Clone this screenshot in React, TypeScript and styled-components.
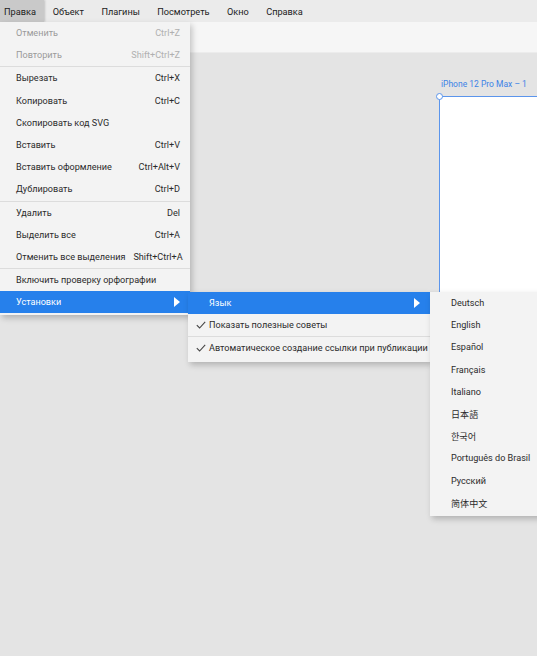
import React from "react";
import styled, { createGlobalStyle } from "styled-components";

const GlobalStyle = createGlobalStyle`
  html, body {
    margin: 0;
    padding: 0;
    background: #e4e4e4;
    font-family: Roboto, "Noto Sans", "Noto Sans CJK SC", sans-serif;
    overflow: hidden;
  }
`;

type Entry =
  | { kind: "item"; label: string; shortcut?: string; disabled?: boolean; active?: boolean; sub?: boolean; checked?: boolean }
  | { kind: "sep" };

const editMenu: Entry[] = [
  { kind: "item", label: "Отменить", shortcut: "Ctrl+Z", disabled: true },
  { kind: "item", label: "Повторить", shortcut: "Shift+Ctrl+Z", disabled: true },
  { kind: "sep" },
  { kind: "item", label: "Вырезать", shortcut: "Ctrl+X" },
  { kind: "item", label: "Копировать", shortcut: "Ctrl+C" },
  { kind: "item", label: "Скопировать код SVG" },
  { kind: "item", label: "Вставить", shortcut: "Ctrl+V" },
  { kind: "item", label: "Вставить оформление", shortcut: "Ctrl+Alt+V" },
  { kind: "item", label: "Дублировать", shortcut: "Ctrl+D" },
  { kind: "sep" },
  { kind: "item", label: "Удалить", shortcut: "Del" },
  { kind: "item", label: "Выделить все", shortcut: "Ctrl+A" },
  { kind: "item", label: "Отменить все выделения", shortcut: "Shift+Ctrl+A" },
  { kind: "sep" },
  { kind: "item", label: "Включить проверку орфографии" },
  { kind: "item", label: "Установки", active: true, sub: true },
];

const prefsMenu: Entry[] = [
  { kind: "item", label: "Язык", active: true, sub: true },
  { kind: "item", label: "Показать полезные советы", checked: true },
  { kind: "sep" },
  { kind: "item", label: "Автоматическое создание ссылки при публикации", checked: true },
];

const languages = [
  "Deutsch",
  "English",
  "Español",
  "Français",
  "Italiano",
  "日本語",
  "한국어",
  "Português do Brasil",
  "Русский",
  "简体中文",
];

const topMenus = ["Правка", "Объект", "Плагины", "Посмотреть", "Окно", "Справка"];

function Arrow() {
  return (
    <svg width="6" height="10" viewBox="0 0 6 10">
      <path d="M0 0 L6 5 L0 10 Z" fill="#fff" />
    </svg>
  );
}

function Check() {
  return (
    <svg width="10" height="8" viewBox="0 0 10 8">
      <path d="M0.8 4.2 L3.6 7 L9.2 0.8" fill="none" stroke="#444" strokeWidth="1.1" />
    </svg>
  );
}

function MenuList({ entries, indent }: { entries: Entry[]; indent: number }) {
  return (
    <>
      {entries.map((e, i) =>
        e.kind === "sep" ? (
          <Separator key={i} />
        ) : (
          <Item key={i} $active={e.active} $disabled={e.disabled} $indent={indent}>
            {e.checked && (
              <CheckSlot>
                <Check />
              </CheckSlot>
            )}
            <span>{e.label}</span>
            <Shortcut $disabled={e.disabled}>{e.shortcut}</Shortcut>
            {e.sub && <Arrow />}
          </Item>
        )
      )}
    </>
  );
}

export default function App() {
  return (
    <Page>
      <GlobalStyle />
      <MenuBar>
        {topMenus.map((m, i) => (
          <TopItem key={m} $open={i === 0}>
            {m}
          </TopItem>
        ))}
      </MenuBar>
      <Toolbar />
      <Canvas>
        <ArtboardLabel>iPhone 12 Pro Max – 1</ArtboardLabel>
        <Artboard>
          <Handle />
        </Artboard>
      </Canvas>

      <Menu $top={22} $left={0} $width={190}>
        <MenuList entries={editMenu} indent={16} />
      </Menu>
      <Menu $top={292} $left={188} $width={242}>
        <MenuList entries={prefsMenu} indent={21} />
      </Menu>
      <Menu $top={292} $left={430} $width={120}>
        {languages.map((l) => (
          <Item key={l} $indent={21}>
            <span>{l}</span>
          </Item>
        ))}
      </Menu>
    </Page>
  );
}

const Page = styled.div`
  position: relative;
  width: 537px;
  height: 656px;
  overflow: hidden;
  background: #e4e4e4;
`;

const MenuBar = styled.div`
  display: flex;
  height: 22px;
  background: #ebebeb;
  font-size: 9.2px;
  color: #222;
`;

const TopItem = styled.div<{ $open?: boolean }>`
  display: flex;
  align-items: center;
  padding: 0 8.7px;
  background: ${(p) => (p.$open ? "#c9c9c9" : "transparent")};
  box-shadow: ${(p) => (p.$open ? "1px 0 2px rgba(0,0,0,0.18)" : "none")};
  &:first-child {
    padding: 0 8px 0 4px;
  }
`;

const Toolbar = styled.div`
  height: 30px;
  background: #f6f6f6;
  border-bottom: 1px solid #ececec;
`;

const Canvas = styled.div`
  position: relative;
  height: 603px;
`;

const ArtboardLabel = styled.div`
  position: absolute;
  left: 441px;
  top: 26px;
  font-size: 8.5px;
  color: #3d83e6;
  white-space: nowrap;
`;

const Artboard = styled.div`
  position: absolute;
  left: 439px;
  top: 43px;
  width: 200px;
  height: 420px;
  background: #fff;
  border-left: 1px solid #5b95ec;
  border-top: 1px solid #5b95ec;
  box-sizing: border-box;
`;

const Handle = styled.div`
  position: absolute;
  left: -4px;
  top: -4px;
  width: 5px;
  height: 5px;
  border-radius: 50%;
  border: 1px solid #5b95ec;
  background: #fff;
`;

const Menu = styled.div<{ $top: number; $left: number; $width: number }>`
  position: absolute;
  top: ${(p) => p.$top}px;
  left: ${(p) => p.$left}px;
  width: ${(p) => p.$width}px;
  background: #f3f3f3;
  box-shadow: 2px 3px 6px rgba(0, 0, 0, 0.22);
  padding-bottom: 2px;
  font-size: 9.1px;
`;

const Item = styled.div<{ $active?: boolean; $disabled?: boolean; $indent: number }>`
  position: relative;
  display: flex;
  align-items: center;
  height: 22.2px;
  padding: 0 10px 0 ${(p) => p.$indent}px;
  background: ${(p) => (p.$active ? "#2680eb" : "transparent")};
  color: ${(p) => (p.$active ? "#fff" : p.$disabled ? "#9a9a9a" : "#2b2b2b")};
  white-space: nowrap;
`;

const CheckSlot = styled.span`
  position: absolute;
  left: 8px;
  top: 7px;
  display: flex;
`;

const Shortcut = styled.span<{ $disabled?: boolean }>`
  margin-left: auto;
  padding-left: 8px;
  color: ${(p) => (p.$disabled ? "#b0b0b0" : "#2b2b2b")};
`;

const Separator = styled.div`
  height: 1px;
  background: #dcdcdc;
`;
